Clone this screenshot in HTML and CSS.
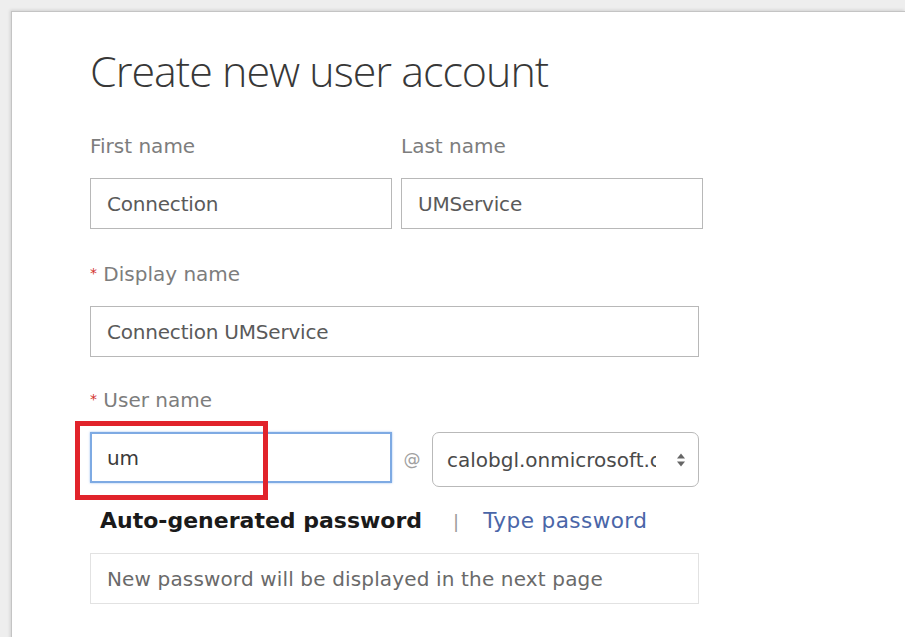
FILE: index.html
```html
<!DOCTYPE html>
<html lang="en">
<head>
<meta charset="utf-8">
<title>Create new user account</title>
<link rel="stylesheet" href="styles.css">
</head>
<body>
<main class="panel">
  <h1 class="title">Create new user account</h1>

  <div class="name-row">
    <div class="field">
      <label class="label" for="first">First name</label>
      <input class="text-input" id="first" type="text" value="Connection">
    </div>
    <div class="field">
      <label class="label" for="last">Last name</label>
      <input class="text-input" id="last" type="text" value="UMService">
    </div>
  </div>

  <div class="field field-wide">
    <label class="label" for="display"><span class="req">*</span> Display name</label>
    <input class="text-input" id="display" type="text" value="Connection UMService">
  </div>

  <div class="field field-wide field-user">
    <label class="label" for="user"><span class="req">*</span> User name</label>
    <div class="user-row">
      <div class="user-wrap">
        <input class="text-input focused" id="user" type="text" value="um">
        <span class="callout"></span>
      </div>
      <span class="at">@</span>
      <div class="domain">
        <span class="domain-text">calobgl.onmicrosoft.com</span>
        <svg class="spin" width="10" height="16" viewBox="0 0 10 16" aria-hidden="true">
          <path d="M1 6.5 L5 1.5 L9 6.5 Z" fill="#666"/>
          <path d="M1 9.5 L5 14.5 L9 9.5 Z" fill="#666"/>
        </svg>
      </div>
    </div>
  </div>

  <div class="pw-tabs">
    <span class="pw-tab active">Auto-generated password</span>
    <span class="pw-sep">|</span>
    <a class="pw-tab link" href="#">Type password</a>
  </div>

  <div class="pw-note">New password will be displayed in the next page</div>
</main>
</body>
</html>
```

FILE: styles.css
```css
html, body {
  margin: 0;
  padding: 0;
}

body {
  background: #eeeeee;
  font-family: "DejaVu Sans", "Liberation Sans", sans-serif;
  height: 637px;
  overflow: hidden;
}

.panel {
  margin: 11px 0 0 11px;
  height: 640px;
  background: #ffffff;
  border-left: 1px solid #c4c4c4;
  border-top: 1px solid #c4c4c4;
  box-shadow: -1px -1px 3px rgba(0, 0, 0, 0.12);
  padding: 31px 0 0 78px;
  box-sizing: border-box;
}

.title {
  margin: 0;
  font-family: "Open Sans", sans-serif;
  font-weight: 300;
  font-size: 43px;
  line-height: 56px;
  color: #383838;
  letter-spacing: -1px;
}

.name-row {
  display: flex;
  gap: 9px;
  margin-top: 35px;
}

.field {
  display: flex;
  flex-direction: column;
  width: 302px;
}

.field-wide {
  width: 609px;
  margin-top: 32px;
}

.field-user {
  margin-top: 30px;
}

.label {
  font-size: 20px;
  line-height: 24px;
  color: #7d7d7d;
  margin-bottom: 20px;
}

.req {
  color: #d2302c;
  font-size: 14px;
  vertical-align: 3px;
}

.text-input {
  box-sizing: border-box;
  height: 51px;
  width: 100%;
  border: 1px solid #b8b8b8;
  padding: 0 16px;
  font-family: inherit;
  font-size: 20px;
  letter-spacing: -0.2px;
  color: #5a5a5a;
  background: #ffffff;
  outline: none;
}

.user-row {
  display: flex;
  align-items: flex-start;
}

.user-wrap {
  position: relative;
  width: 302px;
  flex: none;
}

.text-input.focused {
  border: 2px solid #7eaae3;
  box-shadow: 0 0 2px rgba(90, 150, 230, 0.6);
  color: #3a3a3a;
  padding-left: 15px;
}

/* red annotation frame drawn over the user name box */
.callout {
  position: absolute;
  left: -15px;
  top: -11px;
  width: 193px;
  height: 79px;
  box-sizing: border-box;
  border: 5px solid #e1232b;
}

.at {
  width: 40px;
  text-align: center;
  font-size: 17px;
  color: #a0a0a0;
  line-height: 54px;
  flex: none;
}

.domain {
  box-sizing: border-box;
  width: 267px;
  height: 55px;
  border: 1px solid #b9b9b9;
  border-radius: 7px;
  display: flex;
  align-items: center;
  padding: 0 12px 0 14px;
  gap: 20px;
  background: #ffffff;
}

.domain-text {
  flex: 1;
  overflow: hidden;
  white-space: nowrap;
  text-overflow: clip;
  font-size: 20px;
  color: #4a4a4a;
}

.spin {
  flex: none;
}

.pw-tabs {
  display: flex;
  align-items: baseline;
  margin-top: 20px;
  padding-left: 10px;
  line-height: 28px;
}

.pw-tab {
  font-size: 21.6px;
}

.pw-tab.active {
  font-weight: bold;
  font-size: 22px;
  color: #1a1a1a;
}

.pw-sep {
  color: #9a9a9a;
  font-size: 18px;
  margin: 0 24px 0 31px;
}

.pw-tab.link {
  color: #4a66a8;
  text-decoration: none;
  letter-spacing: 0.4px;
}

.pw-note {
  box-sizing: border-box;
  width: 609px;
  height: 51px;
  margin-top: 17px;
  border: 1px solid #e2e2e2;
  padding: 0 16px;
  display: flex;
  align-items: center;
  font-size: 20px;
  letter-spacing: 0.15px;
  color: #6a6a6a;
}
```
